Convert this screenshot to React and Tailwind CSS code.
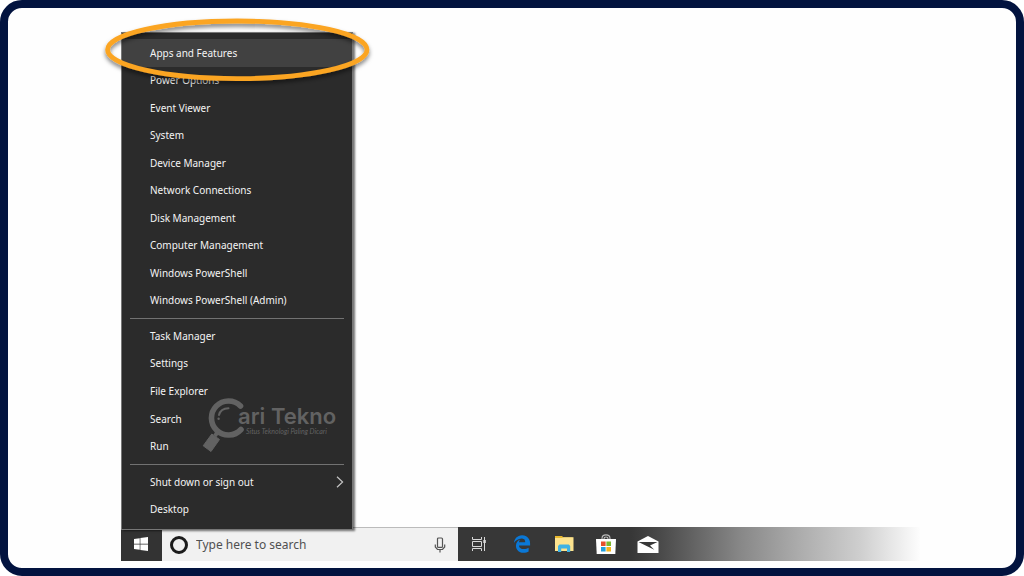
import React from "react";
import { FaEdgeLegacy, FaWindows } from "react-icons/fa";

const toolItems = [
  "Apps and Features",
  "Power Options",
  "Event Viewer",
  "System",
  "Device Manager",
  "Network Connections",
  "Disk Management",
  "Computer Management",
  "Windows PowerShell",
  "Windows PowerShell (Admin)",
];
const systemItems = ["Task Manager", "Settings", "File Explorer", "Search", "Run"];
const sessionItems = ["Shut down or sign out", "Desktop"];

function MenuGroup({ items, active, submenu, className }) {
  return (
    <ul className={"grid auto-rows-fr " + className}>
      {items.map((label) => (
        <li key={label} className="flex">
          <button
            type="button"
            className={
              "flex w-full items-center justify-between pt-px pr-2 pl-7 text-left " +
              (label === active ? "bg-[#414141]" : "")
            }
          >
            {label}
            {label === submenu && (
              <svg className="h-3 w-2" viewBox="0 0 8 12" fill="none" stroke="#c4c4c4" strokeWidth="1.2" aria-hidden="true">
                <path d="M1 0.7 6.6 6 1 11.3" />
              </svg>
            )}
          </button>
        </li>
      ))}
    </ul>
  );
}

function Divider() {
  return <hr className="mx-2 mt-1 mb-[3px] border-t border-[#727272]" />;
}

function Highlight() {
  return (
    <svg
      className="pointer-events-none absolute -top-[17px] -left-[21px] h-[72px] w-[276px]"
      viewBox="0 0 276 72"
      fill="none"
      aria-hidden="true"
    >
      <defs>
        <filter id="ring-shadow" x="-5%" y="-15%" width="110%" height="135%">
          <feDropShadow dx="0" dy="3" stdDeviation="2" floodColor="#000" floodOpacity="0.5" />
        </filter>
      </defs>
      <ellipse cx="136.3" cy="33.8" rx="129.7" ry="28.8" stroke="#fba524" strokeWidth="4.8" filter="url(#ring-shadow)" />
    </svg>
  );
}

function Watermark() {
  return (
    <div className="pointer-events-none absolute top-[364px] left-[80px] flex text-[#626262]">
      <svg className="h-[56px] w-[42px] shrink-0" viewBox="0 0 42 56" fill="none" aria-hidden="true">
        <path d="M38.5 9A17 17 0 1 0 39 32.5" stroke="currentColor" strokeWidth="5.6" strokeLinecap="round" />
        <path d="M17 18C18 14 21.5 11.4 26.5 11.3" stroke="currentColor" strokeWidth="2" strokeLinecap="round" />
        <circle cx="16.6" cy="21.8" r="1.2" fill="currentColor" />
        <path d="m16 34-3 5" stroke="currentColor" strokeWidth="4" />
        <path d="M9.8 37 17.5 42.5 9 54.5 1.2 48.8Z" fill="currentColor" stroke="currentColor" strokeLinejoin="round" />
      </svg>
      <div className="-ml-[6px] pt-[9px] whitespace-nowrap">
        <p className="font-['Inter'] text-[22px] leading-5 font-semibold">ari Tekno</p>
        <p className="pt-px pl-2 font-['Lato'] text-[7px] leading-2 italic">Situs Teknologi Paling Dicari</p>
      </div>
    </div>
  );
}

function StartMenu() {
  return (
    <nav
      aria-label="Start context menu"
      className="relative z-10 w-[232px] border border-[#777] bg-[#2b2b2b] py-[6px] text-[10px] text-[#f4f4f4] shadow-[2px_1px_2px_rgba(0,0,0,0.55)]"
    >
      <MenuGroup items={toolItems} active="Apps and Features" className="h-[275px]" />
      <Divider />
      <MenuGroup items={systemItems} className="h-[138px]" />
      <Divider />
      <MenuGroup items={sessionItems} submenu="Shut down or sign out" className="h-[55px]" />
      <Watermark />
      <Highlight />
    </nav>
  );
}

function MicIcon() {
  return (
    <svg className="h-4 w-3" viewBox="0 0 12 16" fill="none" stroke="#555" strokeWidth="1.2" aria-hidden="true">
      <rect x="3.5" y="1" width="5" height="9.4" rx="1" />
      <path d="M1.3 7.5V10L3.5 12.5H8.5L10.7 10V7.5M6 12.5V15.5" />
    </svg>
  );
}

function TaskViewIcon() {
  return (
    <svg className="h-[14px] w-4" viewBox="0 0 16 14" fill="none" stroke="#d8d8d8" aria-hidden="true">
      <path d="M1.5 0V2.5H10.5V0M1.5 14V11.5H10.5V14M1.5 4.5H10.5V9.5H1.5ZM13.5 0V14" />
      <path d="M12.3 4.5H14.8" strokeWidth="3" />
    </svg>
  );
}

function FolderIcon() {
  return (
    <svg className="h-4 w-5" viewBox="0 0 20 16" aria-hidden="true">
      <path d="M1 0H8L9.5 1.5H18.5V4H1Z" fill="#e9b92e" />
      <path d="M1 2H8L9.5 1.2H19.5V15H1Z" fill="#fde38e" />
      <path d="M4 16V10L5.5 8.6H14.8L16.2 10V16H13V12.6H7.2V16Z" fill="#3fb2e3" />
    </svg>
  );
}

function StoreIcon() {
  return (
    <svg className="h-5 w-5" viewBox="0 0 20 20" aria-hidden="true">
      <path d="M6 6V4.5C6 -.3 14 -.3 14 4.5V6M8 6V4.7C8 2.4 12 2.4 12 4.7V6" fill="none" stroke="#bdbdbd" strokeWidth="1.1" />
      <path d="M0 5H20L19.3 20H.7Z" fill="#fff" />
      <path d="M5 7.5H9.6V12H5Z" fill="#e6502b" />
      <path d="M10.4 7.5H15V12H10.4Z" fill="#7cb82f" />
      <path d="M5 13H9.6V17.5H5Z" fill="#249fdc" />
      <path d="M10.4 13H15V17.5H10.4Z" fill="#f6b51c" />
    </svg>
  );
}

function MailIcon() {
  return (
    <svg className="h-[17px] w-[22px]" viewBox="0 0 22 17" aria-hidden="true">
      <path d="M0.5 5.5 11 0 21.5 5.5V17H0.5Z" fill="#fff" />
      <path d="M1.5 6H20.5L13 9.4 17.3 13.8Z" fill="#373737" />
    </svg>
  );
}

function Taskbar() {
  return (
    <footer className="-mt-[3px] mr-[96px] flex h-[34px] bg-[linear-gradient(to_right,#373737_0,#373737_510px,#4a4a4a_540px,#888_620px,#adadad_680px,#cfcfcf_740px,#fdfdfd_100%)]">
      <button type="button" aria-label="Start" className="flex w-[41px] items-center justify-center bg-[#333] pr-px text-white">
        <FaWindows className="size-4" />
      </button>
      <label className="flex w-[296px] items-center border-t border-[#bbb] bg-[#f1f1f1] pr-3 pl-2">
        <span className="size-[18px] shrink-0 rounded-full border-3 border-[#1c1c1c]" />
        <input
          type="search"
          aria-label="Search"
          placeholder="Type here to search"
          className="ml-2 min-w-0 flex-1 text-[12px] text-[#444] outline-none placeholder:text-[#505050]"
        />
        <MicIcon />
      </label>
      <div className="flex [&>button]:flex [&>button]:w-[42px] [&>button]:items-center [&>button]:justify-center">
        <button type="button" aria-label="Task View"><TaskViewIcon /></button>
        <div className="w-px" />
        <button type="button" aria-label="Edge"><FaEdgeLegacy className="size-[18px] text-[#0a78d7]" /></button>
        <button type="button" aria-label="File Explorer"><FolderIcon /></button>
        <button type="button" aria-label="Store"><StoreIcon /></button>
        <button type="button" aria-label="Mail"><MailIcon /></button>
      </div>
    </footer>
  );
}

export default function App() {
  return (
    <main className="min-h-screen rounded-[22px] border-8 border-[#02133f] bg-[#fefefe] pt-6 pb-[7px] pl-[113px] font-['Noto_Sans',sans-serif]">
      <StartMenu />
      <Taskbar />
    </main>
  );
}
